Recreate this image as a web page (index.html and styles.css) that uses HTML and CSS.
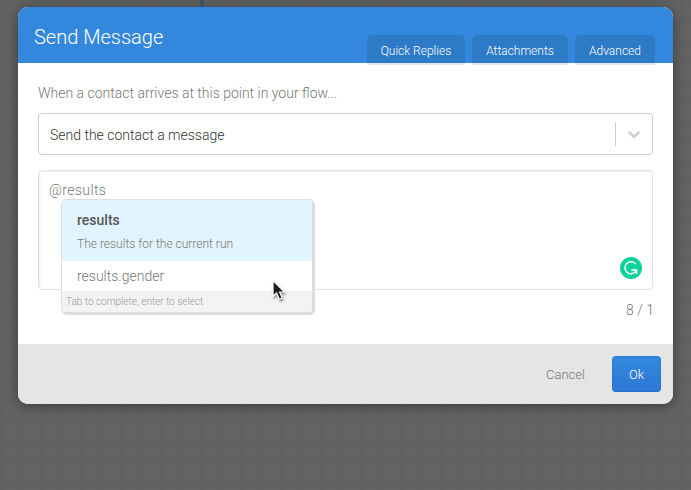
FILE: index.html
```html
<!DOCTYPE html>
<html lang="en">
<head>
<meta charset="utf-8">
<title>Send Message</title>
<link rel="stylesheet" href="styles.css">
</head>
<body>
<div class="connector"></div>
<main class="modal">
  <header class="header">
    <h1 class="title">Send Message</h1>
    <nav class="tabs">
      <button class="tab quick">Quick Replies</button>
      <button class="tab attach">Attachments</button>
      <button class="tab advanced">Advanced</button>
    </nav>
  </header>
  <section class="content">
    <p class="lead">When a contact arrives at this point in your flow...</p>
    <div class="select">
      <span class="value">Send the contact a message</span>
      <span class="separator"></span>
      <span class="arrow"><svg width="20" height="20" viewBox="0 0 20 20"><path fill="#ccc" d="M4.516 7.548c0.436-0.446 1.043-0.481 1.576 0l3.908 3.747 3.908-3.747c0.533-0.481 1.141-0.446 1.574 0 0.436 0.445 0.408 1.197 0 1.615-0.406 0.418-4.695 4.502-4.695 4.502-0.217 0.223-0.502 0.335-0.787 0.335s-0.57-0.112-0.789-0.335c0 0-4.287-4.084-4.695-4.502s-0.436-1.17 0-1.615z"/></svg></span>
    </div>
    <div class="editor">
      <span class="typed">@results</span>
      <svg class="grammar" width="22" height="22" viewBox="0 0 22 22"><circle cx="11" cy="11" r="11" fill="#0bd19a"/><path d="M15.7 7.1A6 6 0 1 0 16.2 13.6M11.3 13.1H16.4V16.7" fill="none" stroke="#fff" stroke-width="1.5"/><path d="M13.1 12.4H17.1V16.6Z" fill="#fff"/></svg>
      <div class="menu">
        <div class="option selected">
          <div class="name">results</div>
          <div class="summary">The results for the current run</div>
        </div>
        <div class="option">results.gender</div>
        <div class="help">Tab to complete, enter to select</div>
      </div>
      <svg class="cursor" width="18" height="24" viewBox="0 0 18 24"><path d="M2 1.5V17.3L5.6 14L8.2 20.2L11.2 19L8.6 13H13.5Z" fill="#1c1c1c" stroke="#fff" stroke-width="1.2"/></svg>
    </div>
    <div class="count">8 / 1</div>
  </section>
  <footer class="footer">
    <button class="btn cancel">Cancel</button>
    <button class="btn ok">Ok</button>
  </footer>
</main>
</body>
</html>
```
FILE: styles.css
```css
* { box-sizing: border-box; }
body {
  margin: 0;
  height: 490px;
  padding: 7px 18px 0;
  overflow: hidden;
  font-family: Roboto, "Liberation Sans", sans-serif;
  font-weight: 300;
  color: #777;
  background-color: #636363;
  background-image:
    linear-gradient(to right, transparent 1px, #5b5f62 1px, #5b5f62 2px, transparent 2px),
    linear-gradient(to bottom, transparent 1px, #5b5f62 1px, #5b5f62 2px, transparent 2px);
  background-size: 20px 20px;
}
button { border: 0; font: inherit; padding: 0; }
.connector { position: absolute; left: 200px; top: 0; width: 4px; height: 7px; background: #3b5366; }
.modal {
  display: flex;
  flex-direction: column;
  height: 397px;
  border-radius: 10px;
  background: #fff;
  box-shadow: 0 2px 12px 1px rgba(0, 0, 0, .35);
}
.header {
  display: flex;
  justify-content: space-between;
  height: 56px;
  padding: 0 18px 0 16px;
  background: #3388de;
  border-radius: 10px 10px 0 0;
}
.title { margin: 0; font-size: 20px; font-weight: 300; line-height: 60px; color: #fff; }
.tabs { display: flex; gap: 7px; padding-top: 28px; }
.tab {
  height: 30px;
  padding-top: 1px;
  border-radius: 5px 5px 0 0;
  background: rgba(0, 0, 0, .1);
  color: #fff;
  font-size: 12px;
}
.quick { width: 98px; }
.attach { width: 96px; }
.advanced { width: 80px; }
.content { flex: 1; padding: 20px 20px 0; }
.lead { margin: 0 0 10px; font-size: 14px; line-height: 20px; }
.select {
  display: flex;
  align-items: center;
  height: 42px;
  padding-left: 11px;
  border: 1px solid #ccc;
  border-radius: 4px;
  font-size: 14px;
  color: #333;
}
.value { flex: 1; padding-top: 2px; line-height: 20px; }
.separator { width: 1px; height: 24px; background: #ccc; }
.arrow { display: flex; padding: 0 8px; }
.editor {
  position: relative;
  height: 120px;
  margin-top: 15px;
  padding: 9px 10px;
  border: 1px solid #e2e2e2;
  border-radius: 4px;
  box-shadow: inset 1px 1px 2px rgba(0, 0, 0, .08);
  font-size: 14px;
  line-height: 20px;
}
.typed { letter-spacing: .4px; }
.grammar { position: absolute; right: 10px; bottom: 10px; }
.menu {
  position: absolute;
  left: 22px;
  top: 28px;
  width: 253px;
  height: 115px;
  overflow: hidden;
  border: 1px solid #ddd;
  border-right-width: 2px;
  border-bottom-width: 2px;
  border-radius: 5px;
  background: #fff;
  box-shadow: 1px 1px 0 #ddd;
}
.option { height: 30px; padding: 5px 15px; }
.selected { height: 61px; padding-top: 10px; background: #e2f5ff; }
.name { font-weight: 500; color: #555; }
.summary { margin-top: 4px; font-size: 12px; }
.help { height: 22px; padding-left: 4px; background: #f3f3f3; color: #999; font-size: 10px; line-height: 21px; }
.cursor { position: absolute; left: 232px; top: 108px; filter: drop-shadow(1px 2px 1px rgba(0, 0, 0, .4)); }
.count { margin: 10px -1px 0 0; text-align: right; font-size: 14px; line-height: 20px; }
.footer {
  display: flex;
  align-items: center;
  justify-content: flex-end;
  height: 60px;
  padding-right: 12px;
  gap: 8px;
  border-radius: 0 0 10px 10px;
  background: #e5e5e5;
}
.btn { height: 36px; font-size: 13px; border-radius: 4px; }
.cancel { width: 77px; background: none; color: #777; }
.ok { width: 49px; background: linear-gradient(#3388de, #2b79d5); color: #fff; box-shadow: inset 0 0 0 1px rgba(0, 70, 160, .15); }
```
